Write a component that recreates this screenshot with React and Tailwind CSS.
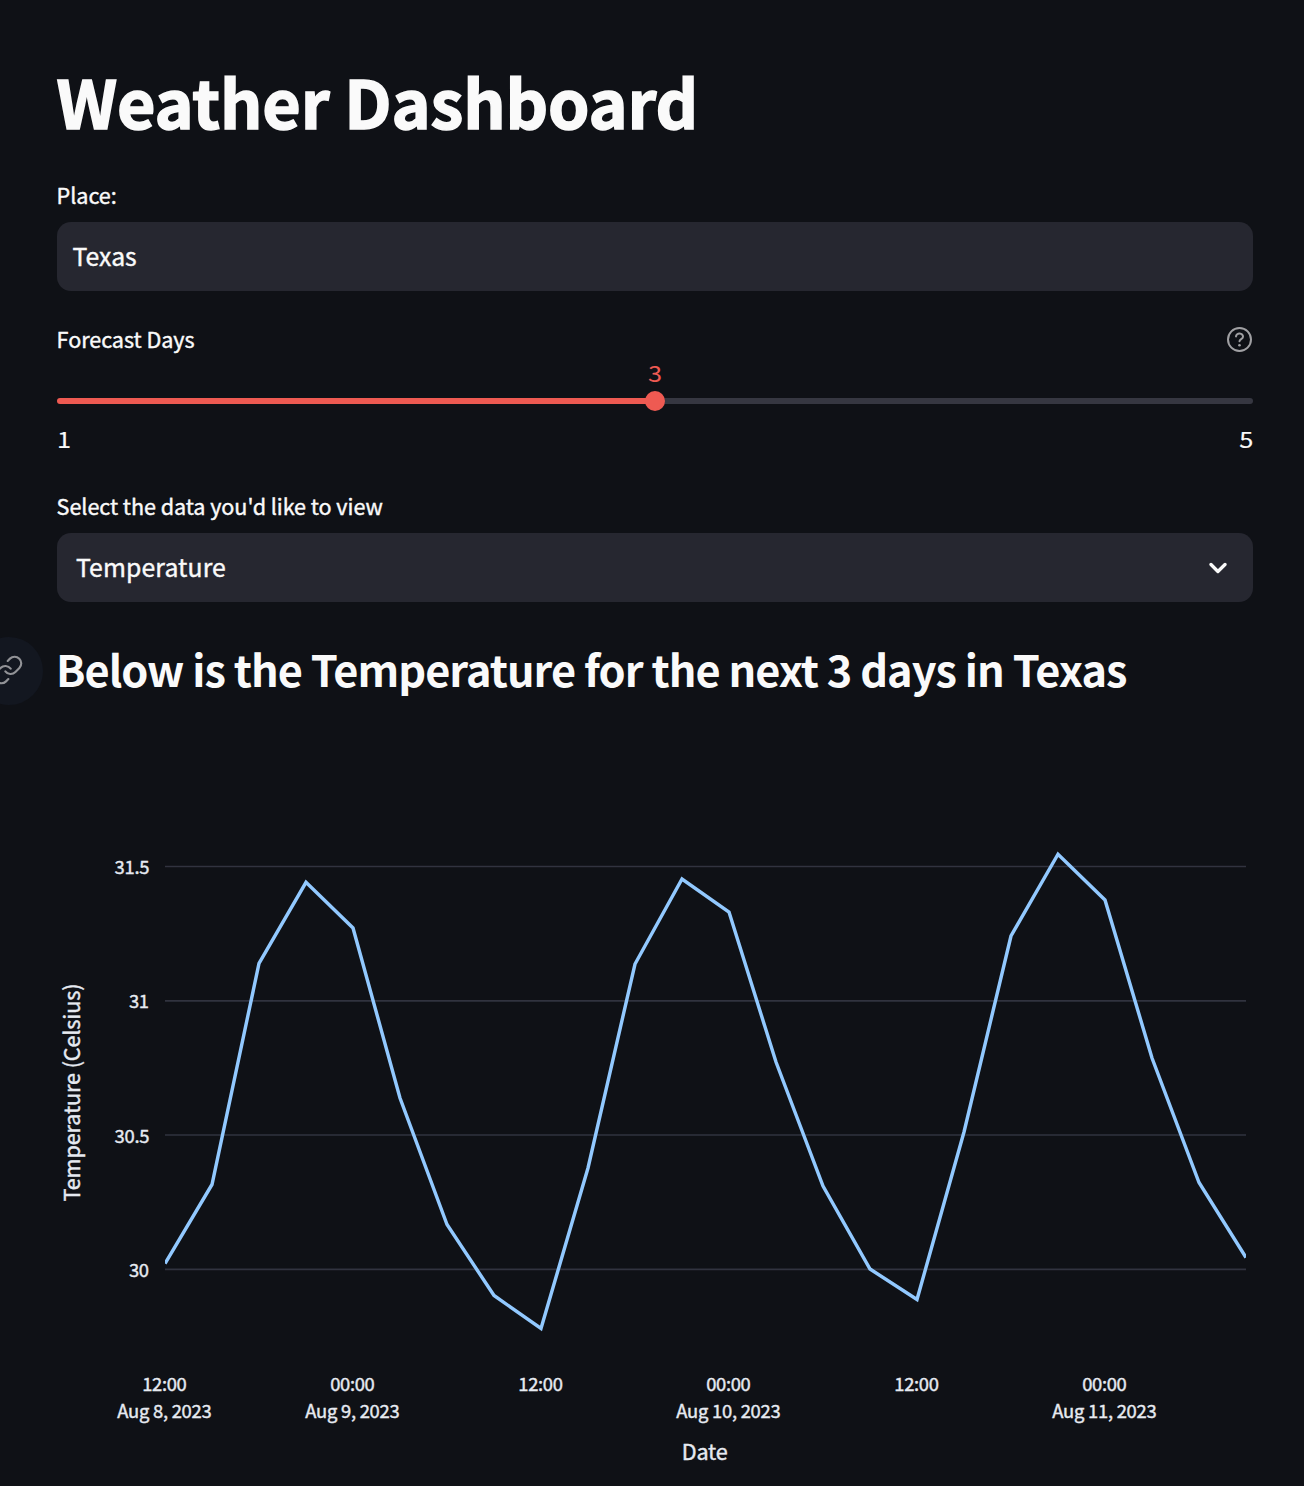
import React from "react";

const temps = [
  1263.5, 1184.5, 963.5, 882.3, 928, 1098, 1224.5, 1295.5, 1328.5, 1168, 964, 879, 912,
  1062, 1186, 1269, 1299.5, 1132, 936, 854.2, 900, 1058, 1182.5, 1257.5,
];

const yTicks = [
  { y: 866.5, label: "31.5", x: 114.5, w: 35 },
  { y: 1000.8, label: "31", x: 129, w: 20 },
  { y: 1135, label: "30.5", x: 114.5, w: 35 },
  { y: 1269.3, label: "30", x: 129, w: 20 },
];

const xTicks = [
  { x: 164.5, time: "12:00", date: "Aug 8, 2023", w: 94.5 },
  { x: 352.5, time: "00:00", date: "Aug 9, 2023", w: 94.5 },
  { x: 540.6, time: "12:00" },
  { x: 728.5, time: "00:00", date: "Aug 10, 2023", w: 104.5 },
  { x: 916.6, time: "12:00" },
  { x: 1104.5, time: "00:00", date: "Aug 11, 2023", w: 104.5 },
];

function Label({ children }) {
  return (
    <label className="-ml-[0.4px] block h-8 pt-px text-[21.6px] leading-8 tracking-[-0.06px] whitespace-nowrap">
      {children}
    </label>
  );
}

function TemperatureChart() {
  const points = temps.map((y, i) => `${165 + i * 47},${y}`).join(" ");
  return (
    <svg className="block h-[766px] w-[1304px]" viewBox="0 720 1304 766" fill="#e6eaf1">
      <defs>
        <clipPath id="plot">
          <rect x="165" y="830" width="1081" height="520" />
        </clipPath>
      </defs>
      {yTicks.map((t) => (
        <g key={t.label}>
          <line x1="165" x2="1246" y1={t.y} y2={t.y} stroke="#31333f" strokeWidth="1.7" />
          <text x={t.x} y={t.y + 7.6} fontSize="18.4" stroke="#e6eaf1" strokeWidth="0.4" textLength={t.w}>{t.label}</text>
        </g>
      ))}
      <polyline points={points} fill="none" stroke="#92c9ff" strokeWidth="3.45" strokeMiterlimit="2" clipPath="url(#plot)" />
      <g stroke="#e6eaf1" strokeWidth="0.4" textAnchor="middle">
        {xTicks.map((t) => (
          <g key={t.x} fontSize="18.4">
            <text x={t.x} y="1391.3" textLength="44.5">{t.time}</text>
            {t.date && <text x={t.x} y="1418.3" textLength={t.w}>{t.date}</text>}
          </g>
        ))}
        <text x="704.7" y="1460" fontSize="21.6" textLength="46">Date</text>
        <text transform="translate(80 1092.5) rotate(-90)" fontSize="21.6" textLength="218">
          Temperature (Celsius)
        </text>
      </g>
    </svg>
  );
}

export default function App() {
  return (
    <main className="h-[1486px] w-[1304px] overflow-hidden bg-[#0f1116] font-['Noto_Sans_CJK_SC',sans-serif] text-[#fafafa] [-webkit-text-stroke:0.4px]">
      <div className="flex h-[720px] flex-col pr-[51px] pl-[57px]">
        <h1 className="mt-[60px] -ml-[0.5px] h-20 text-[66.3px] leading-20 font-bold tracking-[-0.15px] whitespace-nowrap [-webkit-text-stroke:1.5px]">
          Weather Dashboard
        </h1>

        <div className="mt-[38px]">
          <Label>Place:</Label>
          <div className="mt-3 flex h-[69px] items-center rounded-[14px] bg-[#262730] pr-4 pl-[15.5px] pb-[3px] text-[24.8px] leading-9">
            <span>Texas</span>
          </div>
        </div>

        <div className="mt-8 flex h-8 items-center justify-between">
          <div className="-mt-0.5">
            <Label>Forecast Days</Label>
          </div>
          <svg className="mr-px h-[25px] w-[25px]" viewBox="0 0 25 25" fill="none" stroke="#a0a0a3" strokeWidth="2" strokeLinecap="round" strokeLinejoin="round">
            <circle cx="12.5" cy="12.5" r="11.5" />
            <path d="M9 9.4a3.5 3.1 0 0 1 7 .4c0 2.3-3.5 2.4-3.5 4.4" />
            <circle cx="12.5" cy="18.2" r="1.3" fill="#a0a0a3" stroke="none" />
          </svg>
        </div>
        <div className="mt-[5px] h-6 scale-x-115 text-center text-[22px] leading-6 text-[#ee5a52] [-webkit-text-stroke:0px]">3</div>
        <div className="mt-[7px] flex h-5 items-center">
          <div className="h-1.5 flex-1 rounded-l-full bg-[#ee5a52]" />
          <div className="z-10 -mx-2.5 h-5 w-5 shrink-0 rounded-full bg-[#ee5a52]" />
          <div className="h-1.5 flex-1 rounded-r-full bg-[#363741]" />
        </div>
        <div className="mt-[11px] flex h-8 justify-between text-[22px] leading-8 [-webkit-text-stroke:0.15px]">
          <span className="origin-left scale-x-115">1</span>
          <span className="origin-right scale-x-115">5</span>
        </div>

        <div className="mt-[35px]">
          <Label>Select the data you'd like to view</Label>
          <div className="mt-3 flex h-[69px] items-center justify-between rounded-[14px] bg-[#262730] pr-[26px] pl-[19px] text-[24.8px] leading-9">
            <span className="pb-[3px] tracking-[0.1px]">Temperature</span>
            <svg className="h-3 w-[18px]" viewBox="0 0 18 12" fill="none" stroke="#fafafa" strokeWidth="3.3" strokeLinecap="round" strokeLinejoin="round">
              <path d="M2 2.5l6.9 7L16 2.5" />
            </svg>
          </div>
        </div>

        <div className="mt-[35px] -ml-[82px] flex h-[68px] items-center">
          <div className="flex h-[68px] w-[68px] shrink-0 items-center justify-center rounded-full bg-[#131720]">
            <svg className="mr-[2px] mb-0.5 h-[32px] w-[32px]" viewBox="0 0 24 24" fill="none" stroke="#929397" strokeWidth="1.6" strokeLinecap="round" strokeLinejoin="round">
              <path d="M10 13a5 5 0 0 0 7.54.54l3-3a5 5 0 0 0-7.07-7.07l-1.72 1.71" />
              <path d="M14 11a5 5 0 0 0-7.54-.54l-3 3a5 5 0 0 0 7.07 7.07l1.71-1.71" />
            </svg>
          </div>
          <h2 className="ml-[13px] pb-[7px] text-[43.3px] leading-[60px] font-bold tracking-[-0.98px] whitespace-nowrap [-webkit-text-stroke:0px]">
            Below is the Temperature for the next 3 days in Texas
          </h2>
        </div>
      </div>
      <TemperatureChart />
    </main>
  );
}
